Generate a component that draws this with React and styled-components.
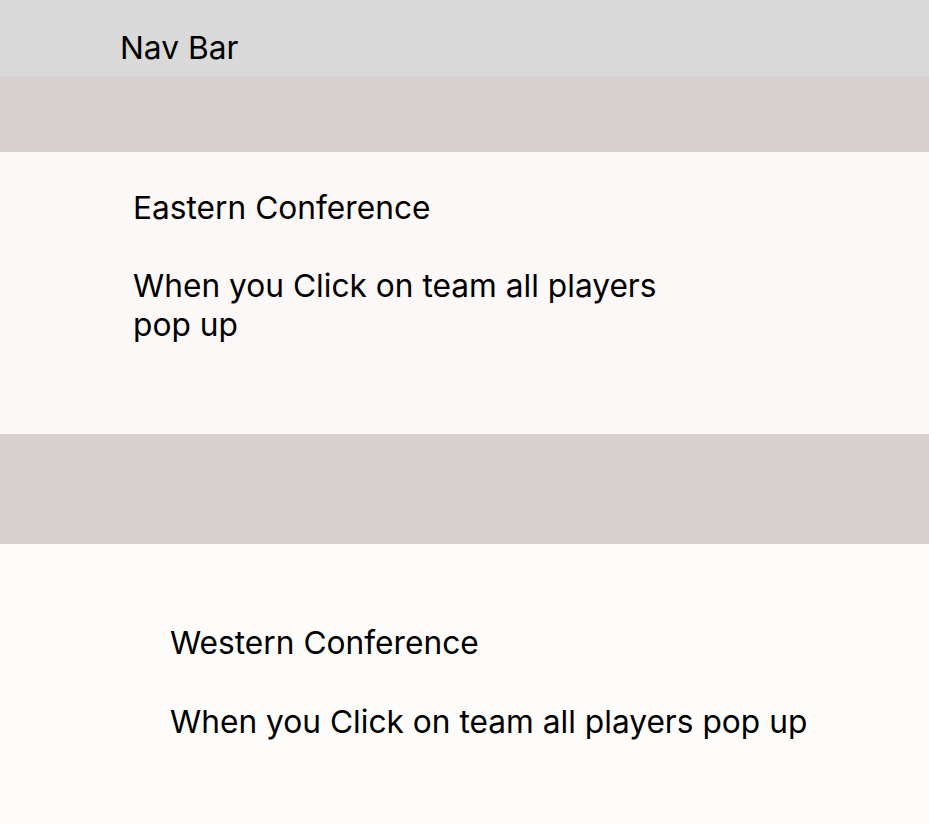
import React from "react";
import styled, { createGlobalStyle } from "styled-components";

const Global = createGlobalStyle`
  html, body { margin: 0; padding: 0; }
  body {
    font-family: Inter, "Noto Sans", sans-serif;
    color: #000;
    background: #fdfcfa;
  }
`;

const Page = styled.div`
  display: flex;
  flex-direction: column;
  width: 929px;
  min-height: 824px;
`;

const NavBar = styled.header`
  height: 76px;
  box-sizing: border-box;
  background: #d9d9d9;
  padding: 28px 0 0 120px;
  font-size: 31.7px;
  line-height: 39px;
`;

const Band = styled.div`
  height: ${(p) => p.$h}px;
  background: #d9d0d1;
`;

const Section = styled.section`
  box-sizing: border-box;
  height: ${(p) => p.$h}px;
  background: ${(p) => p.$bg};
  padding: ${(p) => p.$pt}px 0 0 ${(p) => p.$pl}px;
  display: flex;
  flex-direction: column;
  gap: ${(p) => p.$gap}px;
  font-size: 31.7px;
  line-height: 39px;
`;

const Title = styled.h2`
  margin: 0;
  font-size: inherit;
  font-weight: 400;
  line-height: inherit;
`;

const Body = styled.p`
  margin: 0;
  max-width: ${(p) => p.$max || "none"};
`;

export default function App() {
  return (
    <>
      <Global />
      <Page>
        <NavBar>Nav Bar</NavBar>
        <Band $h={76} />
        <Section $h={282} $bg="#fdf8f8" $pt={36} $pl={133} $gap={39}>
          <Title>Eastern Conference</Title>
          <Body $max="560px">When you Click on team all players pop up</Body>
        </Section>
        <Band $h={110} />
        <Section $h={280} $bg="#fdfcfa" $pt={79} $pl={170} $gap={40}>
          <Title>Western Conference</Title>
          <Body>When you Click on team all players pop up</Body>
        </Section>
      </Page>
    </>
  );
}
